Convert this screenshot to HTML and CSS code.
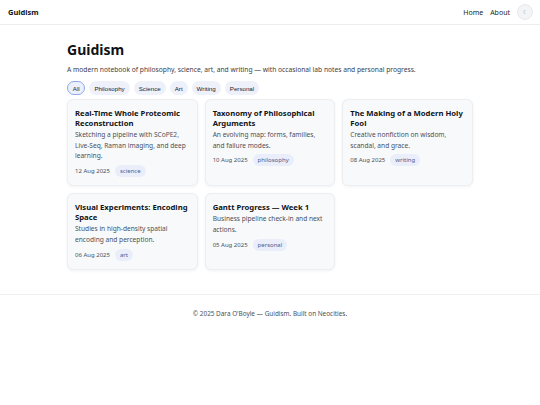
FILE: index.html
```html
<!DOCTYPE html>
<html lang="en">
<head>
<meta charset="utf-8">
<title>Guidism</title>
<link rel="stylesheet" href="styles.css">
</head>
<body>
<header class="site-header">
  <a class="brand" href="#">Guidism</a>
  <nav class="nav">
    <a href="#">Home</a>
    <a href="#">About</a>
    <button class="theme-toggle" aria-label="Toggle theme">☾</button>
  </nav>
</header>
<main class="container">
  <h1 class="title">Guidism</h1>
  <p class="lead">A modern notebook of philosophy, science, art, and writing — with occasional lab notes and personal progress.</p>
  <div class="filters">
    <button class="chip active">All</button>
    <button class="chip">Philosophy</button>
    <button class="chip">Science</button>
    <button class="chip">Art</button>
    <button class="chip">Writing</button>
    <button class="chip">Personal</button>
  </div>
  <section class="grid">
    <article class="card">
      <h2>Real-Time Whole Proteomic Reconstruction</h2>
      <p>Sketching a pipeline with SCoPE2, Live-Seq, Raman imaging, and deep learning.</p>
      <div class="meta"><span class="date">12 Aug 2025</span><span class="tag">science</span></div>
    </article>
    <article class="card">
      <h2>Taxonomy of Philosophical Arguments</h2>
      <p>An evolving map: forms, families, and failure modes.</p>
      <div class="meta"><span class="date">10 Aug 2025</span><span class="tag">philosophy</span></div>
    </article>
    <article class="card">
      <h2>The Making of a Modern Holy Fool</h2>
      <p>Creative nonfiction on wisdom, scandal, and grace.</p>
      <div class="meta"><span class="date">08 Aug 2025</span><span class="tag">writing</span></div>
    </article>
    <article class="card">
      <h2>Visual Experiments: Encoding Space</h2>
      <p>Studies in high-density spatial encoding and perception.</p>
      <div class="meta"><span class="date">06 Aug 2025</span><span class="tag">art</span></div>
    </article>
    <article class="card">
      <h2>Gantt Progress — Week 1</h2>
      <p>Business pipeline check-in and next actions.</p>
      <div class="meta"><span class="date">05 Aug 2025</span><span class="tag">personal</span></div>
    </article>
  </section>
</main>
<footer class="site-footer">© 2025 Dara O'Boyle — Guidism. Built on Neocities.</footer>
</body>
</html>
```
FILE: styles.css
```css
* { box-sizing: border-box; }
html, body { margin: 0; padding: 0; background: #ffffff; }
body {
  font-family: "Noto Sans", "Open Sans", sans-serif;
  color: #111418;
}
a { color: inherit; text-decoration: none; }

.site-header {
  height: 25px;
  padding: 0 7px 0 8px;
  display: flex;
  align-items: center;
  justify-content: space-between;
  border-bottom: 1px solid #eceef1;
}
.brand { font-weight: 700; font-size: 7.5px; }
.nav { display: flex; align-items: center; gap: 7px; font-size: 7px; color: #1b1f24; }
.theme-toggle {
  width: 16px; height: 16px;
  border-radius: 50%;
  border: 1px solid #e6e8ec;
  background: #f3f4f6;
  color: #9aa0a8;
  font-size: 5px;
  padding: 0;
  display: flex; align-items: center; justify-content: center;
}

.container { width: 406px; margin: 0 auto; padding-top: 16px; }
.title { margin: 0; font-size: 14px; line-height: 18px; font-weight: 700; color: #0f1216; }
.lead { margin: 6px 0 0; font-size: 6.7px; line-height: 10px; color: #3b4047; }

.filters { display: flex; gap: 4px; margin-top: 6px; }
.chip {
  font-family: "Liberation Sans", Arial, sans-serif;
  font-size: 6.2px;
  height: 14px;
  padding: 0 4px;
  border-radius: 7px;
  border: 1px solid transparent;
  background: #eef1f9;
  color: #1d2330;
}
.chip.active { border-color: #8fa9e6; background: #eaf0fd; padding: 0 4.75px; }

.grid {
  margin-top: 4px;
  display: grid;
  grid-template-columns: repeat(3, 1fr);
  gap: 7px;
}
.card {
  background: #f8f9fb;
  border: 1px solid #eceef2;
  border-radius: 6px;
  padding: 8px 7px 8px;
  box-shadow: 0 1px 3px rgba(20, 30, 50, 0.06);
}
.card h2 { margin: 0; font-size: 7.7px; line-height: 10px; font-weight: 700; color: #111418; }
.card p { margin: 2px 0 0; font-size: 6.6px; line-height: 10.7px; color: #4a5059; }
.meta { display: flex; align-items: center; gap: 5px; margin-top: 3px; }
.date { font-size: 6px; color: #4a5059; }
.tag {
  font-size: 6px;
  line-height: 12px;
  padding: 0 5px;
  border-radius: 6px;
  background: #eaeefb;
  color: #4b5a8c;
}

.site-footer {
  margin-top: 24px;
  border-top: 1px solid #eef0f2;
  padding: 14px 0 40px;
  text-align: center;
  font-size: 6.4px;
  line-height: 10px;
  color: #4a5059;
}
```
